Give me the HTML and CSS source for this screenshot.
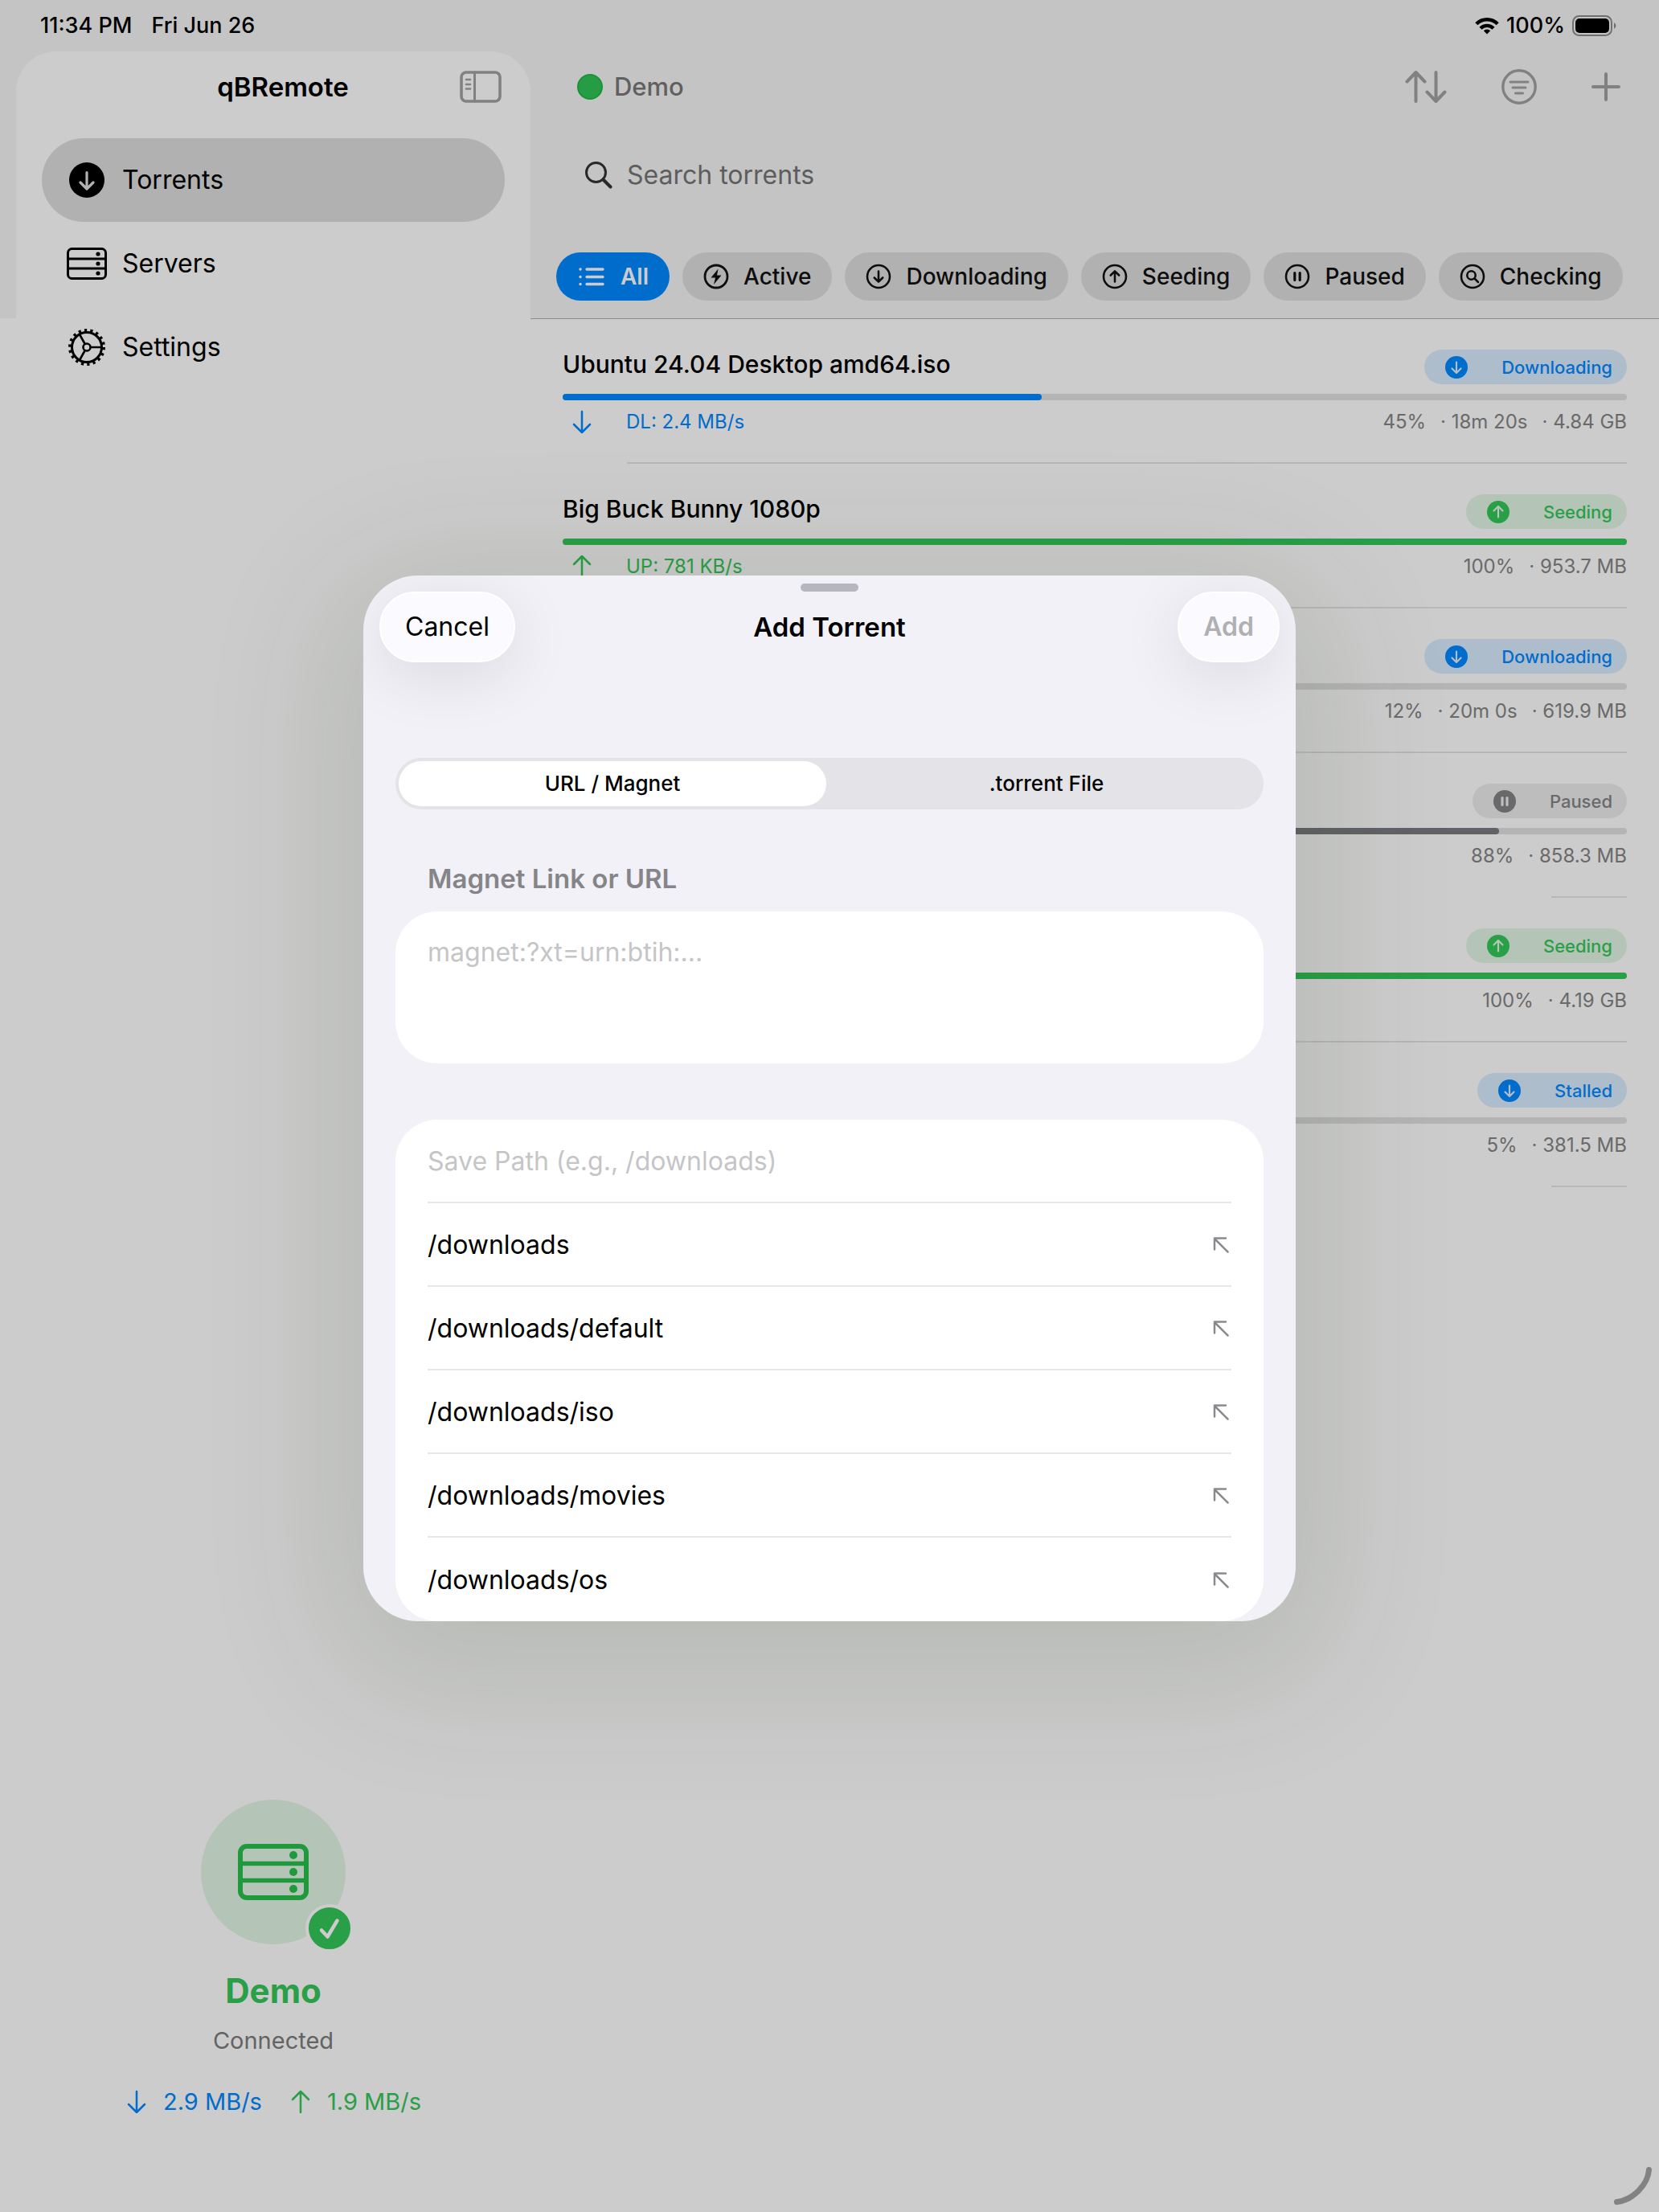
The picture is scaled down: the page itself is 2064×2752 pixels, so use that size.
FILE: index.html
```
<!DOCTYPE html>
<html lang="en">
<head>
<meta charset="utf-8">
<meta name="viewport" content="width=device-width, initial-scale=1">
<title>qBRemote</title>
<link rel="stylesheet" href="styles.css">
</head>
<body>
<svg class="sprite" aria-hidden="true">
  <symbol id="server" viewBox="0 0 52 40">
    <g fill="none" stroke="currentColor" stroke-width="3"><rect x="2.500" y="1.500" width="47" height="37" rx="5"/><path d="M2.500 14h47M2.500 26h47"/></g>
    <g fill="currentColor"><circle cx="40" cy="8" r="2.600"/><circle cx="40" cy="20" r="2.600"/><circle cx="40" cy="32" r="2.600"/></g>
  </symbol>
  <symbol id="down" viewBox="0 0 28 32"><path d="M14 3v26M4 19l10 10 10-10" fill="none" stroke="currentColor" stroke-width="2.500" stroke-linecap="round" stroke-linejoin="round"/></symbol>
  <symbol id="up" viewBox="0 0 28 32"><path d="M14 29V3M4 13L14 3l10 10" fill="none" stroke="currentColor" stroke-width="2.500" stroke-linecap="round" stroke-linejoin="round"/></symbol>
  <symbol id="badge-down" viewBox="0 0 28 28"><circle cx="14" cy="14" r="14" fill="currentColor"/><path d="M14 7.500v13M8.500 15.500l5.500 5.500 5.500-5.500" fill="none" stroke="#e0eefb" stroke-width="2.200" stroke-linecap="round" stroke-linejoin="round"/></symbol>
  <symbol id="badge-up" viewBox="0 0 28 28"><circle cx="14" cy="14" r="14" fill="currentColor"/><path d="M14 20.500v-13M8.500 12.500L14 7l5.500 5.500" fill="none" stroke="#e1f7e6" stroke-width="2.200" stroke-linecap="round" stroke-linejoin="round"/></symbol>
  <symbol id="badge-pause" viewBox="0 0 28 28"><circle cx="14" cy="14" r="14" fill="currentColor"/><path d="M11 9.500v9M17 9.500v9" fill="none" stroke="#eee" stroke-width="3.200" stroke-linecap="round"/></symbol>
  <symbol id="northwest" viewBox="0 0 20 20"><path d="M18.500 18.500L2 2M2 15.500V1.500h14" fill="none" stroke="currentColor" stroke-width="2.500" stroke-linecap="round" stroke-linejoin="round"/></symbol>
</svg>

<div class="page">
  <header class="status">
    <div class="status-left"><span>11:34 PM</span><span>Fri Jun 26</span></div>
    <div class="status-right">
      <svg width="30" height="22" viewBox="0 0 30 22"><g fill="none" stroke="#000" stroke-width="4.400"><path d="M1.800 8.800a18.600 18.600 0 0 1 26.400 0"/><path d="M7 14.200a11.300 11.300 0 0 1 16 0"/></g><path d="M15 21.500l-4.200-4.300a6 6 0 0 1 8.400 0z"/></svg>
      <span>100%</span>
      <svg width="56" height="26" viewBox="0 0 56 26"><rect x="1" y="1" width="48" height="24" rx="7.500" fill="none" stroke="#8d8d8d" stroke-width="2"/><rect x="4" y="4" width="42" height="18" rx="5"/><path d="M52 9a4.500 4.500 0 0 1 0 8z" fill="#8d8d8d"/></svg>
    </div>
  </header>

  <div class="shell">
    <aside class="sidebar">
      <div class="sidebar-head">
        <h1>qBRemote</h1>
        <button class="icon-button toggle" aria-label="Toggle sidebar">
          <svg width="52" height="40" viewBox="0 0 52 40" fill="none" stroke="currentColor" stroke-linecap="round"><rect x="2" y="2" width="48" height="36" rx="6" stroke-width="3.600"/><path d="M18.500 2v36" stroke-width="3"/><path d="M8 11h5M8 17h5M8 22.500h5" stroke-width="2.600"/></svg>
        </button>
      </div>
      <nav class="nav">
        <a class="nav-item selected" href="#torrents">
          <svg width="52" height="44" viewBox="0 0 52 44"><circle cx="26" cy="22" r="22"/><path d="M26 12.500v20M18 25l8 8 8-8" fill="none" stroke="#dedede" stroke-width="3.200" stroke-linecap="round" stroke-linejoin="round"/></svg>
          Torrents</a>
        <a class="nav-item" href="#servers"><svg width="52" height="40"><use href="#server"/></svg>Servers</a>
        <a class="nav-item" href="#settings">
          <svg width="52" height="46" viewBox="-26 -23 52 46" fill="none" stroke="#000"><circle r="18.500" stroke-width="3"/><circle r="21" stroke-width="4" stroke-dasharray="3.200 4.130"/><circle r="4.500" stroke-width="2.600"/><path d="M4.500 0H18M-2.300 -4L-9 -16M-2.300 4L-9 16" stroke-width="2.600"/></svg>
          Settings</a>
      </nav>
      <section class="server-card">
        <div class="server-avatar">
          <svg width="88" height="70" viewBox="0 0 88 70"><g fill="none" stroke="currentColor"><rect x="3" y="3" width="82" height="64" rx="8" stroke-width="6"/><path d="M3 24.500h82M3 45.500h82" stroke-width="5.500"/></g><g fill="currentColor"><circle cx="69" cy="14" r="5"/><circle cx="69" cy="35" r="5"/><circle cx="69" cy="56" r="5"/></g></svg>
          <span class="check"><svg width="52" height="52" viewBox="0 0 52 52"><path d="M16 28.500l7.500 8 12-20" fill="none" stroke="#fff" stroke-width="4.500" stroke-linecap="round" stroke-linejoin="round"/></svg></span>
        </div>
        <h2>Demo</h2>
        <p>Connected</p>
        <div class="rates">
          <span class="rate blue"><svg width="28" height="32"><use href="#down"/></svg>2.9 MB/s</span>
          <span class="rate green"><svg width="28" height="32"><use href="#up"/></svg>1.9 MB/s</span>
        </div>
      </section>
    </aside>

    <main class="main">
      <div class="toolbar">
        <div class="server-name"><span class="dot"></span>Demo</div>
        <div class="tools">
          <button class="icon-button" aria-label="Sort"><svg width="52" height="42" viewBox="0 0 52 42" fill="none" stroke="currentColor" stroke-width="4" stroke-linecap="round" stroke-linejoin="round"><path d="M13.500 39V3M2.500 14.500L13.500 3l11 11.500M38.500 3v36M27.500 27.500l11 11.500 11-11.500"/></svg></button>
          <button class="icon-button" aria-label="Filter"><svg width="44" height="44" viewBox="0 0 44 44" fill="none" stroke="currentColor" stroke-width="3.400" stroke-linecap="round"><circle cx="22" cy="22" r="20.200"/><path d="M11 16h22M14 23h16M17.500 30h9" stroke-width="3"/></svg></button>
          <button class="icon-button" aria-label="Add torrent"><svg width="36" height="36" viewBox="0 0 36 36" fill="none" stroke="currentColor" stroke-width="4" stroke-linecap="round"><path d="M18 2v32M2 18h32"/></svg></button>
        </div>
      </div>
      <label class="search">
        <svg width="34" height="34" viewBox="0 0 34 34" fill="none" stroke="#333" stroke-linecap="round"><circle cx="13.500" cy="13.500" r="12" stroke-width="3"/><path d="M22.500 22.500L31.500 31.500" stroke-width="4"/></svg>
        <input type="search" placeholder="Search torrents" aria-label="Search torrents">
      </label>
      <div class="chips">
        <button class="chip active"><svg width="40" height="36" viewBox="0 0 40 36" fill="none" stroke="currentColor" stroke-width="3.400" stroke-linecap="round"><path d="M14 9h20M14 18.500h20M14 27.500h20M6 9h.1M6 18.500h.1M6 27.500h.1"/></svg>All</button>
        <button class="chip"><svg width="36" height="36" viewBox="0 0 36 36"><circle cx="18" cy="18" r="14" fill="none" stroke="currentColor" stroke-width="2.800"/><path d="M20.500 8.500L11.500 19.500h5.500l-2 8.500L24.500 16.500H19z" fill="currentColor"/></svg>Active</button>
        <button class="chip"><svg width="36" height="36" viewBox="0 0 36 36" fill="none" stroke="currentColor" stroke-width="2.600" stroke-linecap="round" stroke-linejoin="round"><circle cx="18" cy="18" r="14"/><path d="M18 11.500v13M12.800 19.500l5.200 5.200 5.200-5.200"/></svg>Downloading</button>
        <button class="chip"><svg width="36" height="36" viewBox="0 0 36 36" fill="none" stroke="currentColor" stroke-width="2.600" stroke-linecap="round" stroke-linejoin="round"><circle cx="18" cy="18" r="14"/><path d="M18 24.500v-13M12.800 16.500l5.200-5.200 5.200 5.200"/></svg>Seeding</button>
        <button class="chip"><svg width="36" height="36" viewBox="0 0 36 36" fill="none" stroke="currentColor" stroke-width="2.600" stroke-linecap="round"><circle cx="18" cy="18" r="14"/><path d="M14.800 13.500v9M21.200 13.500v9" stroke-width="3.200"/></svg>Paused</button>
        <button class="chip"><svg width="36" height="36" viewBox="0 0 36 36" fill="none" stroke="currentColor" stroke-width="2.600" stroke-linecap="round"><circle cx="18" cy="18" r="14"/><circle cx="16.500" cy="16.500" r="5.200"/><path d="M20.500 20.500l4.500 4.500"/></svg>Checking</button>
      </div>

      <ul class="torrents">
        <li class="torrent blue">
          <div class="line"><h3>Ubuntu 24.04 Desktop amd64.iso</h3><span class="badge"><svg width="28" height="28"><use href="#badge-down"/></svg>Downloading</span></div>
          <div class="track"><div class="fill" style="width:45%"></div></div>
          <div class="line"><span class="speed"><svg width="28" height="32"><use href="#down"/></svg>DL: 2.4 MB/s</span><span class="stats"><span>45%</span><span>· 18m 20s</span><span>· 4.84 GB</span></span></div>
        </li>
        <li class="torrent green">
          <div class="line"><h3>Big Buck Bunny 1080p</h3><span class="badge"><svg width="28" height="28"><use href="#badge-up"/></svg>Seeding</span></div>
          <div class="track"><div class="fill" style="width:100%"></div></div>
          <div class="line"><span class="speed"><svg width="28" height="32"><use href="#up"/></svg>UP: 781 KB/s</span><span class="stats"><span>100%</span><span>· 953.7 MB</span></span></div>
        </li>
        <li class="torrent blue">
          <div class="line"><span class="badge"><svg width="28" height="28"><use href="#badge-down"/></svg>Downloading</span></div>
          <div class="track"><div class="fill" style="width:12%"></div></div>
          <div class="line"><span class="stats"><span>12%</span><span>· 20m 0s</span><span>· 619.9 MB</span></span></div>
        </li>
        <li class="torrent gray short">
          <div class="line"><span class="badge"><svg width="28" height="28"><use href="#badge-pause"/></svg>Paused</span></div>
          <div class="track"><div class="fill" style="width:88%"></div></div>
          <div class="line"><span class="stats"><span>88%</span><span>· 858.3 MB</span></span></div>
        </li>
        <li class="torrent green">
          <div class="line"><span class="badge"><svg width="28" height="28"><use href="#badge-up"/></svg>Seeding</span></div>
          <div class="track"><div class="fill" style="width:100%"></div></div>
          <div class="line"><span class="stats"><span>100%</span><span>· 4.19 GB</span></span></div>
        </li>
        <li class="torrent blue short">
          <div class="line"><span class="badge"><svg width="28" height="28"><use href="#badge-down"/></svg>Stalled</span></div>
          <div class="track"><div class="fill" style="width:5%"></div></div>
          <div class="line"><span class="stats"><span>5%</span><span>· 381.5 MB</span></span></div>
        </li>
      </ul>
    </main>
  </div>
</div>

<div class="backdrop">
  <form class="sheet" role="dialog" aria-labelledby="sheet-title">
    <div class="grabber"></div>
    <div class="sheet-head">
      <button type="button" class="pill">Cancel</button>
      <h2 id="sheet-title">Add Torrent</h2>
      <button type="submit" class="pill add" disabled>Add</button>
    </div>
    <div class="sheet-body">
      <div class="segmented">
        <label><input type="radio" name="source" checked><span>URL / Magnet</span></label>
        <label><input type="radio" name="source"><span>.torrent File</span></label>
      </div>
      <label class="field-label" for="magnet">Magnet Link or URL</label>
      <textarea id="magnet" class="magnet" placeholder="magnet:?xt=urn:btih:..."></textarea>
      <div class="paths">
        <div class="path"><input type="text" placeholder="Save Path (e.g., /downloads)" aria-label="Save path"></div>
        <button type="button" class="path">/downloads<svg width="20" height="20"><use href="#northwest"/></svg></button>
        <button type="button" class="path">/downloads/default<svg width="20" height="20"><use href="#northwest"/></svg></button>
        <button type="button" class="path">/downloads/iso<svg width="20" height="20"><use href="#northwest"/></svg></button>
        <button type="button" class="path">/downloads/movies<svg width="20" height="20"><use href="#northwest"/></svg></button>
        <button type="button" class="path">/downloads/os<svg width="20" height="20"><use href="#northwest"/></svg></button>
      </div>
    </div>
  </form>
  <svg class="corner" width="60" height="60" viewBox="0 0 60 60"><path d="M47.500 7.500C46 26 28 45 7.500 47.500" fill="none" stroke="#828282" stroke-width="7" stroke-linecap="round"/></svg>
</div>
</body>
</html>
```
FILE: styles.css
```
* { box-sizing: border-box; }

body {
  margin: 0;
  position: relative;
  background: #fff;
  color: #000;
  font: 400 32px/40px Inter, "Liberation Sans", sans-serif;
}

h1, h2, h3, p, ul { margin: 0; padding: 0; }
h1, h2 { font-size: 33px; font-weight: 600; }
svg { display: block; flex: none; }
button, input, textarea {
  font: inherit;
  color: inherit;
  border: 0;
  padding: 0;
  background: none;
  outline: 0;
}
.sprite { position: absolute; width: 0; height: 0; }
.blue { color: #08f; }
.green { color: #34c759; }
.gray { color: #848488; }

.page {
  display: flex;
  flex-direction: column;
  min-height: 100vh;
  background: linear-gradient(#f6f6f6 396px, #fff 396px);
}

/* Status bar */
.status {
  display: flex;
  justify-content: space-between;
  align-items: center;
  height: 64px;
  padding: 0 52px 0 50px;
  font-size: 27px;
  font-weight: 500;
}
.status-left { display: flex; gap: 24px; }
.status-right { display: flex; align-items: center; gap: 9px; }

.shell {
  flex: 1;
  display: grid;
  grid-template-columns: 660px 1fr;
}

/* Sidebar */
.sidebar {
  display: flex;
  flex-direction: column;
  margin-left: 20px;
  border-radius: 50px 50px 0 0;
  background: #fff;
}
.sidebar-head {
  display: grid;
  grid-template-columns: 1fr auto 1fr;
  align-items: center;
  height: 88px;
  padding: 0 36px 0 60px;
}
.sidebar-head h1 { grid-column: 2; }
.icon-button { color: #a2a2a2; }
.toggle { justify-self: end; }
.nav { padding: 20px 32px; }
.nav-item {
  display: flex;
  align-items: center;
  gap: 18px;
  height: 104px;
  padding-left: 30px;
  border-radius: 52px;
  color: #000;
  text-decoration: none;
}
.nav-item.selected { background: #dedede; }

.server-card {
  display: flex;
  flex-direction: column;
  align-items: center;
  margin-top: auto;
  padding-bottom: 117px;
  font-size: 29px;
}
.server-avatar {
  position: relative;
  display: grid;
  place-items: center;
  width: 180px;
  height: 180px;
  border-radius: 50%;
  background: #e1f7e6;
  color: #28c04d;
}
.check {
  position: absolute;
  right: -10px;
  bottom: -10px;
  border: 4px solid #fff;
  border-radius: 50%;
  background: #34c759;
}
.server-card h2 {
  margin-top: 30px;
  font-size: 42px;
  line-height: 56px;
  font-weight: 700;
  color: #34c759;
}
.server-card p { margin-top: 14px; color: #7c7c7c; }
.rates { display: flex; gap: 34px; margin-top: 36px; }
.rate { display: flex; align-items: center; gap: 19px; }

/* Main column */
.main { min-width: 0; }
.toolbar {
  display: flex;
  justify-content: space-between;
  align-items: center;
  height: 88px;
  padding: 0 48px 0 58px;
}
.server-name {
  display: flex;
  align-items: center;
  gap: 14px;
  font-size: 31px;
  font-weight: 500;
  color: #787878;
}
.dot {
  width: 32px;
  height: 32px;
  border: 2px solid #20b840;
  border-radius: 50%;
  background: #30c455;
}
.tools { display: flex; align-items: center; gap: 68px; }
.search {
  display: flex;
  align-items: center;
  gap: 18px;
  height: 132px;
  padding: 0 68px;
}
.search input { flex: 1; }
.search input::placeholder { color: #757575; opacity: 1; }
.chips {
  display: flex;
  gap: 16px;
  padding: 30px 32px 22px;
  border-bottom: 1px solid #b2b2b2;
}
.chip {
  display: flex;
  align-items: center;
  gap: 16px;
  height: 60px;
  padding: 0 26px 0 24px;
  border-radius: 30px;
  background: #dedede;
  color: #111;
  font-size: 28px;
  font-weight: 500;
  white-space: nowrap;
}
.chip.active { background: #08f; color: #fff; font-weight: 600; }

/* Torrent list */
.torrents { padding: 0 40px; list-style: none; }
.torrent { padding-top: 38px; }
.line { display: flex; justify-content: space-between; }
.torrent h3 {
  font-size: 30px;
  line-height: 36px;
  font-weight: 500;
  color: #000;
}
.badge {
  display: flex;
  align-items: center;
  gap: 42px;
  height: 43px;
  margin-left: auto;
  padding: 0 18px 0 26px;
  border-radius: 22px;
  background: #d9edff;
  font-size: 22px;
  font-weight: 500;
}
.green .badge { background: #e1f7e6; }
.gray .badge { background: #ededed; }
.track {
  height: 8px;
  margin-top: 12px;
  border-radius: 4px;
  background: #e2e2e2;
}
.fill { height: 8px; border-radius: 4px; background: currentColor; }
.gray .fill { background: #7b7b80; }
.torrent .line:last-child { height: 77px; padding-top: 6px; }
.speed {
  display: flex;
  align-items: center;
  gap: 41px;
  height: 42px;
  padding-left: 10px;
  font-size: 24px;
}
.stats {
  display: flex;
  gap: 18px;
  margin-left: auto;
  font-size: 24px;
  line-height: 42px;
  color: #858585;
}
.torrent::after {
  content: "";
  display: block;
  height: 2px;
  margin-left: 80px;
  background: #e5e5e5;
}
.short::after { width: 94px; margin-left: auto; }

/* Sheet */
.backdrop {
  position: absolute;
  inset: 0;
  display: grid;
  place-items: center;
  padding-bottom: 20px;
  background: rgba(0, 0, 0, .2);
}
.sheet {
  width: min(1160px, 90vw);
  padding: 10px 11px 0;
  border-radius: 68px;
  background: #f2f1f7;
  box-shadow: 0 36px 170px 36px rgba(30, 55, 15, .12);
  overflow: hidden;
}
.grabber {
  width: 72px;
  height: 10px;
  margin: 0 auto;
  border-radius: 5px;
  background: #b6b6be;
}
.sheet-head {
  display: grid;
  grid-template-columns: 1fr auto 1fr;
  align-items: center;
  padding: 0 9px;
}
.pill {
  justify-self: start;
  height: 88px;
  padding: 0 30px;
  border: 2px solid #fff;
  border-radius: 44px;
  background: #fbfbff;
  box-shadow: 0 16px 80px rgba(0, 0, 0, .1);
}
.pill.add { justify-self: end; font-weight: 600; color: #b0b0b3; }
.sheet-body { padding: 119px 29px 0; }
.segmented {
  display: grid;
  grid-template-columns: 1fr 1fr;
  gap: 8px;
  height: 64px;
  padding: 4px;
  border-radius: 32px;
  background: #e4e3e8;
  font-size: 26px;
  font-weight: 500;
}
.segmented label { position: relative; display: grid; }
.segmented input {
  position: absolute;
  inset: 0;
  margin: 0;
  appearance: none;
  border-radius: 28px;
}
.segmented input:checked { background: #fff; }
.segmented span { position: relative; align-self: center; text-align: center; }
.field-label {
  display: block;
  margin: 66px 40px 21px;
  font-size: 33px;
  font-weight: 600;
  color: #858589;
}
.magnet {
  display: block;
  width: 100%;
  height: 189px;
  padding: 31px 40px;
  border-radius: 52px;
  background: #fff;
  resize: none;
}
.magnet::placeholder, .path input::placeholder { color: #c5c5c7; opacity: 1; }
.paths {
  margin-top: 70px;
  padding: 0 40px;
  border-radius: 52px;
  background: #fff;
}
.path {
  display: flex;
  justify-content: space-between;
  align-items: center;
  width: 100%;
  height: 104px;
  padding: 3px 3px 0 0;
  border-bottom: 2px solid #e6e6e6;
}
.path:last-child { border-bottom: 0; }
.path input { width: 100%; }
.path svg { color: #8a8a8e; }

.corner { position: absolute; right: 0; bottom: 0; }
```
